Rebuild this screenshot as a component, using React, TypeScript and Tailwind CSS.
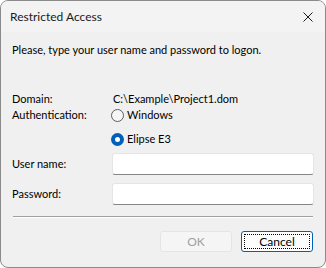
import React from "react";

function Radio({ checked }: { checked?: boolean }) {
  return checked ? (
    <span className="w-[13px] h-[13px] rounded-full bg-[#005fb8] flex items-center justify-center shrink-0">
      <span className="w-[5px] h-[5px] rounded-full bg-white" />
    </span>
  ) : (
    <span className="w-[13px] h-[13px] rounded-full border border-[#5d5d5d] bg-[#f6f6f6] shrink-0" />
  );
}

function Field() {
  return <div className="ml-[100px] w-[202px] h-[22px] bg-white rounded-[3px] border border-[#e5e5e5] border-b-[#868686]" />;
}

export default function App() {
  return (
    <div
      className="w-[326px] h-[268px] flex flex-col bg-[#f0f0f0] border border-[#8a8a8a] rounded-[8px] overflow-hidden text-[11px] text-black"
      style={{ fontFamily: '"Lato", sans-serif' }}
    >
      {/* Title bar */}
      <div className="h-[31px] shrink-0 bg-[#f3f3f3] flex items-center justify-between pl-[9px] pr-[10px]">
        <span className="text-[12px] text-[#1a1a1a]">Restricted Access</span>
        <svg width="10" height="10" viewBox="0 0 10 10" className="mr-[2px]">
          <path d="M0.5 0.5 L9.5 9.5 M9.5 0.5 L0.5 9.5" stroke="#1a1a1a" strokeWidth="1" />
        </svg>
      </div>

      <div className="flex flex-col px-[11px]">
        <div className="h-[18px] mt-[9px] flex items-center">Please, type your user name and password to logon.</div>

        <div className="mt-[32px] h-[16px] flex items-center">
          <span className="w-[101px]">Domain:</span>
          <span>C:\Example\Project1.dom</span>
        </div>

        <div className="h-[16px] flex items-center">
          <span className="w-[99px]">Authentication:</span>
          <span className="flex items-center gap-[3px]">
            <Radio />
            Windows
          </span>
        </div>

        <div className="mt-[8px] h-[16px] flex items-center pl-[99px] gap-[3px]">
          <Radio checked />
          Elipse E3
        </div>

        <div className="relative mt-[6px] h-[22px] flex items-center">
          <span className="absolute left-0">User name:</span>
          <Field />
        </div>

        <div className="relative mt-[8px] h-[22px] flex items-center">
          <span className="absolute left-0">Password:</span>
          <Field />
        </div>

        <div className="mt-[11px] ml-[1px] w-[300px] h-[2px] border-t border-[#a0a0a0] border-b border-b-white" />

        <div className="mt-[13px] flex justify-end gap-[9px] pr-[1px]">
          <button className="w-[72px] h-[21px] rounded-[3px] bg-[#f5f5f5] border border-[#e5e5e5] text-[#a0a0a0] text-[12px]">
            OK
          </button>
          <button className="w-[72px] h-[21px] rounded-[3px] bg-[#fdfdfd] border border-[#005fb8] p-[2px] flex text-[12px]">
            <span className="flex-1 flex items-center justify-center border border-dotted border-black">Cancel</span>
          </button>
        </div>
      </div>
    </div>
  );
}
